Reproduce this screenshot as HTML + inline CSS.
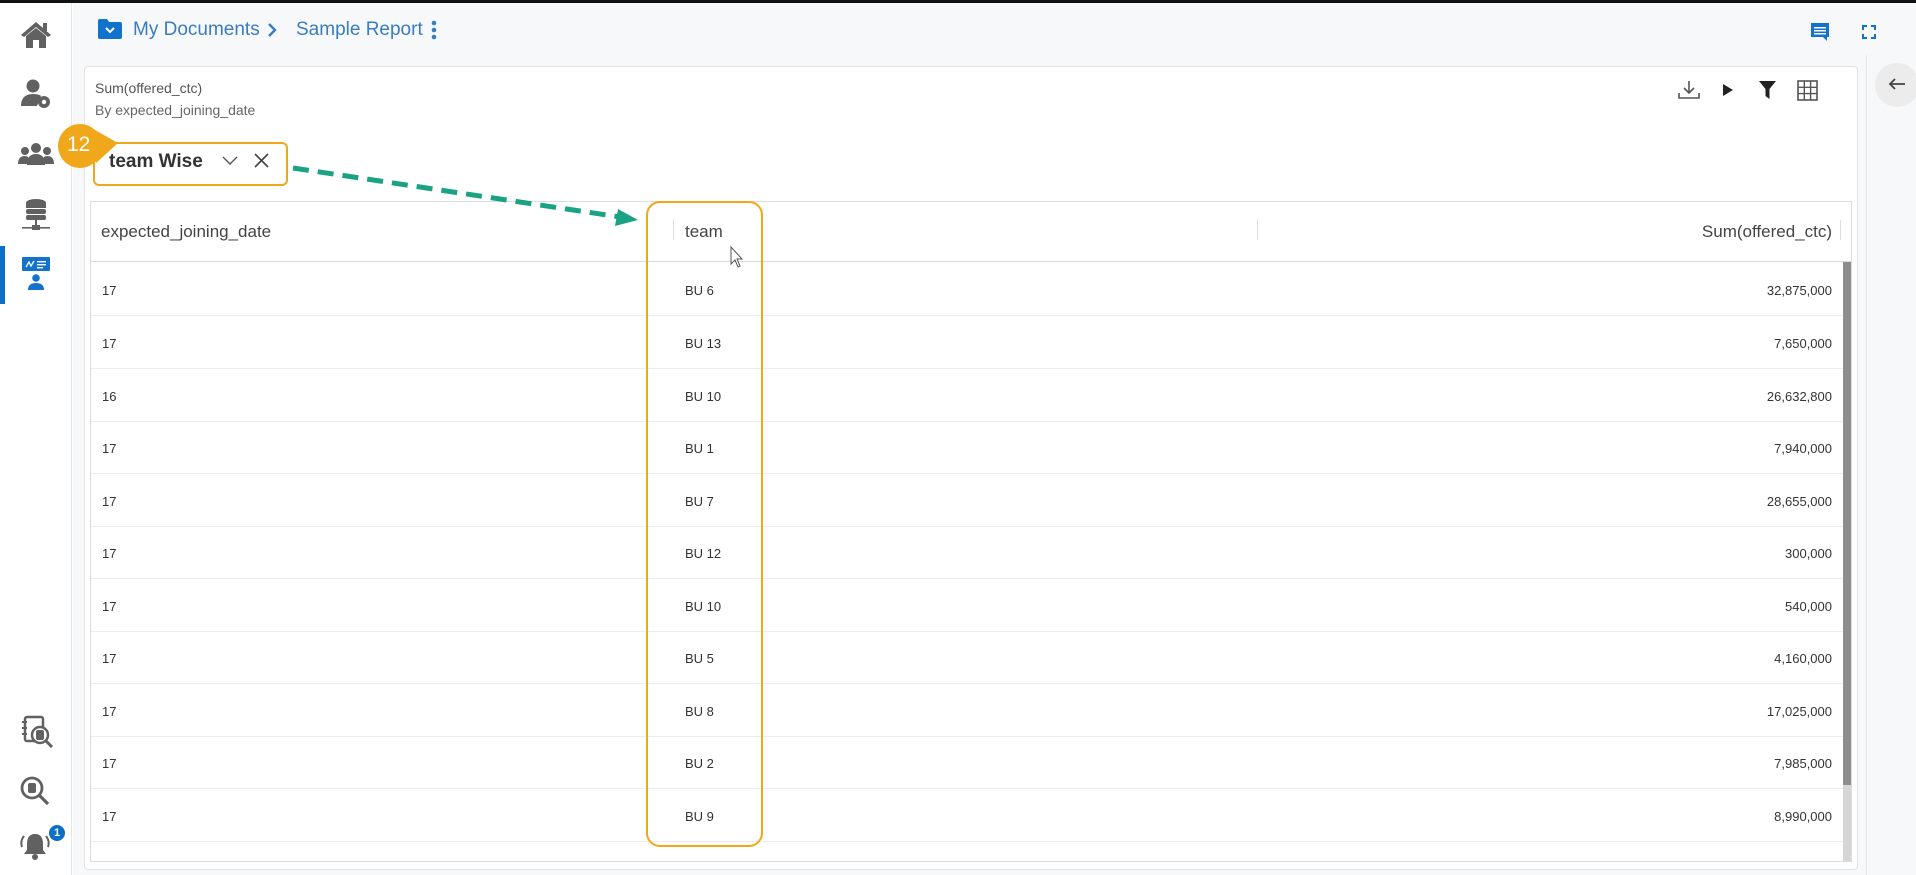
<!DOCTYPE html>
<html><head><meta charset="utf-8">
<style>
*{margin:0;padding:0;box-sizing:border-box}
body{width:1916px;height:875px;overflow:hidden;background:#fff;font-family:"Liberation Sans",sans-serif;position:relative;color:#333}
.abs{position:absolute}
.side{left:0;top:3px;width:72px;height:872px;background:#fff;border-right:1px solid #e6e6e6}
.hdr{left:73px;top:3px;width:1843px;height:60px;background:#f7f8fa}
.main{left:73px;top:63px;width:1794px;height:812px;background:#f7f8fa}
.card{left:84px;top:66px;width:1774px;height:804px;background:#fff;border:1px solid #e3e3e3;border-radius:4px}
.rp{left:1866px;top:55px;width:50px;height:820px;background:#f7f8fa;border-left:1px solid #e8e8e8}
.row{left:91px;width:1752px;height:53px;border-bottom:1px solid #ececec;font-size:13px;color:#333}
.row span{position:absolute;top:20px}
</style></head><body>
<div class="abs" style="left:0;top:0;width:1916px;height:3px;background:#111"></div>
<div class="abs side"></div>
<div class="abs hdr"></div>
<div class="abs main"></div>
<div class="abs rp"></div>

<svg class="abs" style="left:20px;top:20px" width="32" height="30" viewBox="0 0 32 30"><path d="M16 2 L1 15 L4 17 L16 7 L28 17 L31 15 Z" fill="#616161"/><path d="M6 16 L16 8 L26 16 V28 H19 V20 H13 V28 H6 Z" fill="#616161"/><rect x="23" y="3" width="4" height="8" fill="#616161"/></svg>
<svg class="abs" style="left:20px;top:78px" width="32" height="32" viewBox="0 0 32 32"><circle cx="13" cy="8" r="6.5" fill="#616161"/><path d="M1 28 Q1 16 13 16 Q19 16 21 18 L17 28 Z" fill="#616161"/><circle cx="24" cy="24" r="6" fill="#616161"/><circle cx="24" cy="24" r="2.2" fill="#fff"/></svg>
<svg class="abs" style="left:18px;top:142px" width="36" height="24" viewBox="0 0 36 24"><circle cx="18" cy="6" r="5" fill="#616161"/><circle cx="7" cy="9" r="4" fill="#616161"/><circle cx="29" cy="9" r="4" fill="#616161"/><path d="M9 23 Q9 12 18 12 Q27 12 27 23Z" fill="#616161"/><path d="M0 22 Q0 14 7 14 Q11 14 11 18 V22Z M36 22 Q36 14 29 14 Q25 14 25 18 V22Z" fill="#616161"/></svg>
<svg class="abs" style="left:20px;top:198px" width="32" height="36" viewBox="0 0 32 36"><ellipse cx="16" cy="5" rx="10" ry="4" fill="#616161"/><rect x="6" y="5" width="20" height="5" fill="#616161"/><rect x="6" y="11" width="20" height="5" rx="2" fill="#616161"/><rect x="6" y="17" width="20" height="5" rx="2" fill="#616161"/><rect x="15" y="22" width="2" height="7" fill="#616161"/><rect x="2" y="29" width="28" height="1.6" fill="#616161"/><rect x="12" y="27" width="8" height="5" fill="#616161"/></svg>
<div class="abs" style="left:0;top:246px;width:5px;height:58px;background:#0b6fc7"></div>
<svg class="abs" style="left:22px;top:257px" width="28" height="36" viewBox="0 0 28 36"><rect x="0" y="0" width="28" height="14" rx="1" fill="#1272cc"/><path d="M4 10 L7 5 L9 9 L12 4" stroke="#fff" stroke-width="1.3" fill="none"/><rect x="15" y="4" width="9" height="1.4" fill="#fff"/><rect x="15" y="7" width="9" height="1.4" fill="#fff"/><rect x="15" y="10" width="6" height="1.4" fill="#fff"/><circle cx="14" cy="21" r="3.8" fill="#1272cc"/><path d="M6 33 Q6 26 14 26 Q22 26 22 33Z" fill="#1272cc"/></svg>
<svg class="abs" style="left:22px;top:715px" width="32" height="34" viewBox="0 0 32 34"><rect x="3" y="2" width="18" height="24" rx="2" fill="none" stroke="#616161" stroke-width="2.5"/><rect x="0" y="6" width="5" height="2" fill="#616161"/><rect x="0" y="12" width="5" height="2" fill="#616161"/><rect x="0" y="18" width="5" height="2" fill="#616161"/><circle cx="18" cy="20" r="8" fill="#fff" stroke="#616161" stroke-width="2.5"/><rect x="14" y="15" width="8" height="10" rx="2" fill="#616161"/><path d="M24 26 L30 32" stroke="#616161" stroke-width="3"/></svg>
<svg class="abs" style="left:19px;top:775px" width="32" height="32" viewBox="0 0 32 32"><circle cx="13" cy="13" r="10" fill="none" stroke="#616161" stroke-width="2.8"/><rect x="9" y="8" width="8" height="10" rx="2" fill="#616161"/><path d="M20 20 L29 29" stroke="#616161" stroke-width="3.2"/></svg>
<svg class="abs" style="left:19px;top:830px" width="32" height="32" viewBox="0 0 32 32"><path d="M16 4 Q8 4 8 14 V20 L5 24 H27 L24 20 V14 Q24 4 16 4Z" fill="#616161"/><circle cx="16" cy="27" r="3" fill="#616161"/><path d="M5 6 Q1 11 3 17 M27 6 Q31 11 29 17" stroke="#616161" stroke-width="2" fill="none"/></svg>
<div class="abs" style="left:49px;top:825px;width:16px;height:16px;border-radius:50%;background:#0b6fc7;color:#fff;font-size:11px;font-weight:bold;text-align:center;line-height:16px">1</div>

<svg class="abs" style="left:98px;top:19px" width="24" height="20" viewBox="0 0 24 20"><path d="M0 2 Q0 0 2 0 H9 L11 3 H22 Q24 3 24 5 V18 Q24 20 22 20 H2 Q0 20 0 18Z" fill="#1272cc"/><path d="M8 9 L12 13 L16 9" stroke="#fff" stroke-width="2" fill="none"/></svg>
<div class="abs" style="left:133px;top:19px;font-size:19px;color:#3a7cc0">My Documents</div>
<svg class="abs" style="left:267px;top:22px" width="10" height="16" viewBox="0 0 10 16"><path d="M2 2 L8 8 L2 14" stroke="#3a7cc0" stroke-width="2.4" fill="none"/></svg>
<div class="abs" style="left:296px;top:19px;font-size:19px;color:#3a7cc0">Sample Report</div>
<svg class="abs" style="left:431px;top:20px" width="6" height="20" viewBox="0 0 6 20"><circle cx="3" cy="3" r="2.3" fill="#3a7cc0"/><circle cx="3" cy="10" r="2.3" fill="#3a7cc0"/><circle cx="3" cy="17" r="2.3" fill="#3a7cc0"/></svg>
<svg class="abs" style="left:1810px;top:22px" width="20" height="20" viewBox="0 0 20 20"><path d="M1 1 H19 V15 H17 V19 L13 15 H1Z" fill="#1272cc"/><rect x="4" y="5" width="12" height="1.5" fill="#fff"/><rect x="4" y="8" width="12" height="1.5" fill="#fff"/><rect x="4" y="11" width="12" height="1.5" fill="#fff"/></svg>
<svg class="abs" style="left:1862px;top:25px" width="14" height="14" viewBox="0 0 14 14"><path d="M1 5 V1 H5 M9 1 H13 V5 M13 9 V13 H9 M5 13 H1 V9" stroke="#1272cc" stroke-width="2" fill="none"/></svg>

<div class="abs" style="left:1875px;top:63px;width:44px;height:44px;border-radius:50%;background:#ececec"></div>
<svg class="abs" style="left:1887px;top:77px" width="20" height="14" viewBox="0 0 20 14"><path d="M18 7 H3 M8 2 L3 7 L8 12" stroke="#444" stroke-width="1.8" fill="none"/></svg>

<div class="abs card"></div>
<div class="abs" style="left:95px;top:80px;font-size:14px;color:#555">Sum(offered_ctc)</div>
<div class="abs" style="left:95px;top:102px;font-size:14px;color:#666">By expected_joining_date</div>
<svg class="abs" style="left:1678px;top:80px" width="22" height="20" viewBox="0 0 22 20"><path d="M11 1 V13 M6 8 L11 13 L16 8" stroke="#555" stroke-width="1.6" fill="none"/><path d="M1 13 V18 H21 V13" stroke="#555" stroke-width="1.6" fill="none"/></svg>
<svg class="abs" style="left:1723px;top:84px" width="10" height="12" viewBox="0 0 10 12"><path d="M0 0 L10 6 L0 12Z" fill="#222"/></svg>
<svg class="abs" style="left:1759px;top:81px" width="17" height="18" viewBox="0 0 17 18"><path d="M0 0 H17 L10.5 8 V18 L6.5 15 V8Z" fill="#222"/></svg>
<svg class="abs" style="left:1797px;top:80px" width="21" height="21" viewBox="0 0 21 21"><rect x="1" y="1" width="19" height="19" fill="none" stroke="#555" stroke-width="1.6"/><path d="M7.3 1 V20 M13.6 1 V20 M1 7.3 H20 M1 13.6 H20" stroke="#555" stroke-width="1.4"/></svg>

<div class="abs" style="left:93px;top:142px;width:195px;height:44px;border:2px solid #f0a81a;border-radius:6px;background:#fff"></div>
<div class="abs" style="left:109px;top:151px;font-size:19px;font-weight:bold;color:#333">team Wise</div>
<svg class="abs" style="left:222px;top:156px" width="16" height="10" viewBox="0 0 16 10"><path d="M1 1 L8 8 L15 1" stroke="#555" stroke-width="1.4" fill="none"/></svg>
<svg class="abs" style="left:254px;top:153px" width="15" height="15" viewBox="0 0 15 15"><path d="M1 1 L14 14 M14 1 L1 14" stroke="#444" stroke-width="1.6"/></svg>
<svg class="abs" style="left:0;top:0" width="130" height="180"><circle cx="80" cy="146" r="22" fill="#f0a81a"/><path d="M88 126 L118 143 L96 163Z" fill="#f0a81a"/></svg>
<div class="abs" style="left:67px;top:133px;font-size:21px;color:#fff">12</div>

<div class="abs" style="left:90px;top:201px;width:1762px;height:661px;border:1px solid #dcdcdc;background:#fff"></div>
<div class="abs" style="left:91px;top:202px;width:1760px;height:60px;border-bottom:1px solid #d6dbe0"></div>
<div class="abs" style="left:101px;top:222px;font-size:17px;color:#444">expected_joining_date</div>
<div class="abs" style="left:673px;top:220px;width:1px;height:20px;background:#ddd"></div>
<div class="abs" style="left:685px;top:222px;font-size:17px;color:#444">team</div>
<div class="abs" style="left:1257px;top:220px;width:1px;height:20px;background:#ddd"></div>
<div class="abs" style="left:1600px;width:232px;top:222px;font-size:17px;color:#444;text-align:right">Sum(offered_ctc)</div>
<div class="abs" style="left:1840px;top:220px;width:1px;height:20px;background:#ddd"></div>

<div class="abs row" style="top:263px"><span style="left:11px">17</span><span style="left:594px">BU 6</span><span style="right:11px">32,875,000</span></div>
<div class="abs row" style="top:316px"><span style="left:11px">17</span><span style="left:594px">BU 13</span><span style="right:11px">7,650,000</span></div>
<div class="abs row" style="top:369px"><span style="left:11px">16</span><span style="left:594px">BU 10</span><span style="right:11px">26,632,800</span></div>
<div class="abs row" style="top:421px"><span style="left:11px">17</span><span style="left:594px">BU 1</span><span style="right:11px">7,940,000</span></div>
<div class="abs row" style="top:474px"><span style="left:11px">17</span><span style="left:594px">BU 7</span><span style="right:11px">28,655,000</span></div>
<div class="abs row" style="top:526px"><span style="left:11px">17</span><span style="left:594px">BU 12</span><span style="right:11px">300,000</span></div>
<div class="abs row" style="top:579px"><span style="left:11px">17</span><span style="left:594px">BU 10</span><span style="right:11px">540,000</span></div>
<div class="abs row" style="top:631px"><span style="left:11px">17</span><span style="left:594px">BU 5</span><span style="right:11px">4,160,000</span></div>
<div class="abs row" style="top:684px"><span style="left:11px">17</span><span style="left:594px">BU 8</span><span style="right:11px">17,025,000</span></div>
<div class="abs row" style="top:736px"><span style="left:11px">17</span><span style="left:594px">BU 2</span><span style="right:11px">7,985,000</span></div>
<div class="abs row" style="top:789px"><span style="left:11px">17</span><span style="left:594px">BU 9</span><span style="right:11px">8,990,000</span></div>
<div class="abs" style="left:1843px;top:262px;width:8px;height:599px;background:#d6d6d6"></div>
<div class="abs" style="left:1843px;top:262px;width:8px;height:523px;background:#8e8e8e"></div>

<div class="abs" style="left:646px;top:201px;width:117px;height:646px;border:2px solid #f0a81a;border-radius:14px"></div>
<svg class="abs" style="left:0;top:0" width="1916" height="875"><line x1="293" y1="168" x2="620" y2="217" stroke="#1aa383" stroke-width="5" stroke-dasharray="16 9"/><path d="M638 220 L618 209 L615 226Z" fill="#1aa383"/><path d="M731 247 L731 264 L735 260 L738 267 L740 266 L737 259 L742 259Z" fill="#fff" stroke="#555" stroke-width="1"/></svg>
</body></html>
